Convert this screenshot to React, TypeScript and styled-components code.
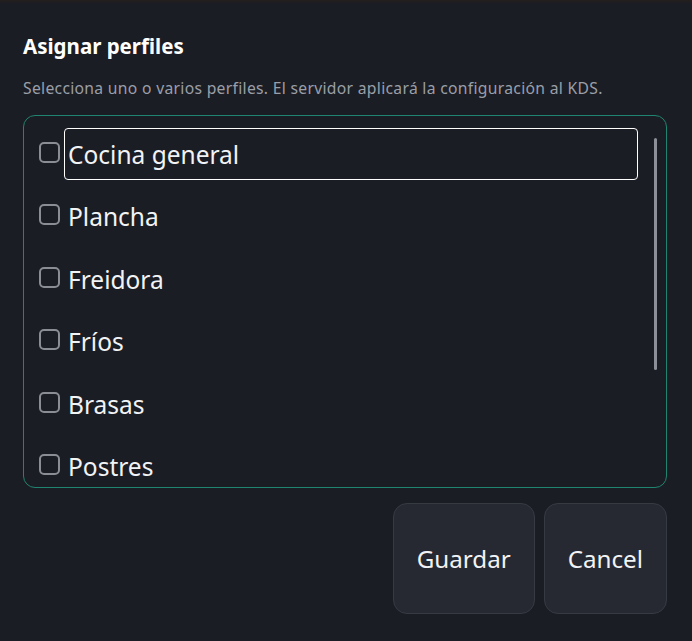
import styled, { createGlobalStyle } from "styled-components";

const profiles = [
  "Cocina general",
  "Plancha",
  "Freidora",
  "Fríos",
  "Brasas",
  "Postres",
  "Bebidas",
  "Pizzas",
];

const GlobalStyle = createGlobalStyle`
  html, body {
    margin: 0;
    padding: 0;
    background: #1b1d24;
  }
  body {
    font-family: "Noto Sans", "Open Sans", sans-serif;
    color: #f2f3f5;
  }
`;

const TopStrip = styled.div`
  height: 3px;
  background: linear-gradient(#241f1e, #1e1d22);
`;

const Dialog = styled.div`
  padding: 30px 25px 0 23px;
  display: flex;
  flex-direction: column;
`;

const Title = styled.h2`
  margin: 0;
  font-size: 20.5px;
  font-weight: 700;
  line-height: 26px;
  color: #ffffff;
`;

const Subtitle = styled.p`
  margin: 18px 0 0;
  font-size: 15.7px;
  letter-spacing: 0.3px;
  line-height: 22px;
  color: #9a9fa8;
  white-space: nowrap;
`;

const ListBox = styled.div`
  position: relative;
  margin-top: 16px;
  height: 371px;
  border: 1px solid #1f8570;
  border-radius: 12px;
  overflow: hidden;
`;

const List = styled.div`
  display: flex;
  flex-direction: column;
  gap: 10.5px;
  padding: 12px 28px 0 15px;
`;

const Row = styled.label`
  display: flex;
  align-items: center;
  gap: 4px;
`;

const Box = styled.span`
  flex: none;
  width: 17px;
  height: 17px;
  margin-top: -4px;
  border: 2px solid #8a8d94;
  border-radius: 5px;
`;

const ItemText = styled.span<{ $focused?: boolean }>`
  flex: 1;
  height: 50px;
  display: flex;
  align-items: center;
  padding: 0 3px;
  font-size: 24.5px;
  color: #f2f3f5;
  border: 1px solid ${(p) => (p.$focused ? "#ffffff" : "transparent")};
  border-radius: 4px;
`;

const ScrollThumb = styled.div`
  position: absolute;
  top: 22px;
  right: 9px;
  width: 3px;
  height: 232px;
  border-radius: 2px;
  background: #8c8f97;
`;

const Actions = styled.div`
  display: flex;
  justify-content: flex-end;
  gap: 9px;
  margin-top: 15px;
`;

const Button = styled.button`
  height: 111px;
  padding: 0 23px;
  font-family: "Noto Sans", "Open Sans", sans-serif;
  font-size: 24.2px;
  color: #f2f3f5;
  background: #262932;
  border: 1px solid #363a43;
  border-radius: 14px;
`;

export default function App(): JSX.Element {
  return (
    <>
      <GlobalStyle />
      <TopStrip />
      <Dialog>
        <Title>Asignar perfiles</Title>
        <Subtitle>
          Selecciona uno o varios perfiles. El servidor aplicará la
          configuración al KDS.
        </Subtitle>
        <ListBox>
          <List>
            {profiles.map((name, i) => (
              <Row key={name}>
                <Box />
                <ItemText $focused={i === 0}>{name}</ItemText>
              </Row>
            ))}
          </List>
          <ScrollThumb />
        </ListBox>
        <Actions>
          <Button>Guardar</Button>
          <Button>Cancel</Button>
        </Actions>
      </Dialog>
    </>
  );
}
